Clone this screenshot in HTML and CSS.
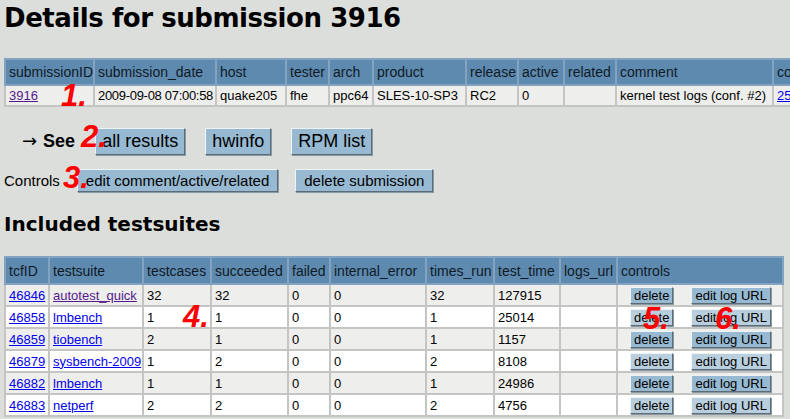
FILE: index.html
```html
<!DOCTYPE html>
<html>
<head>
<meta charset="utf-8">
<title>Details for submission 3916</title>
<link rel="stylesheet" href="styles.css">
</head>
<body>
<h1 class="title">Details for submission 3916</h1>
<div class="wide">
<table class="grid top">
<colgroup>
<col class="c-sid"><col class="c-date"><col class="c-host"><col class="c-tester"><col class="c-arch"><col class="c-product"><col class="c-release"><col class="c-active"><col class="c-related"><col class="c-comment"><col class="c-config">
</colgroup>
<tr class="head"><th>submissionID</th><th>submission_date</th><th>host</th><th>tester</th><th>arch</th><th>product</th><th>release</th><th>active</th><th>related</th><th>comment</th><th>config</th></tr>
<tr class="odd"><td><a class="visited" href="#">3916</a></td><td class="date">2009-09-08 07:00:58</td><td>quake205</td><td>fhe</td><td>ppc64</td><td>SLES-10-SP3</td><td>RC2</td><td>0</td><td></td><td>kernel test logs (conf. #2)</td><td><a href="#">2534</a></td></tr>
</table>
</div>
<div class="see">
<span class="see-label"><span class="arrow">→</span>See</span>
<button class="btn big">all results</button>
<button class="btn big">hwinfo</button>
<button class="btn big">RPM list</button>
</div>
<div class="controls">
<span class="ctl-label">Controls</span>
<button class="btn mid">edit comment/active/related</button>
<button class="btn mid">delete submission</button>
</div>
<h2 class="sub">Included testsuites</h2>
<table class="grid tests">
<colgroup>
<col class="t-id"><col class="t-suite"><col class="t-cases"><col class="t-succ"><col class="t-fail"><col class="t-int"><col class="t-runs"><col class="t-time"><col class="t-logs"><col class="t-ctl">
</colgroup>
<tr class="head"><th>tcfID</th><th>testsuite</th><th>testcases</th><th>succeeded</th><th>failed</th><th>internal_error</th><th>times_run</th><th>test_time</th><th>logs_url</th><th>controls</th></tr>
<tr class="odd"><td><a href="#">46846</a></td><td><a class="visited" href="#">autotest_quick</a></td><td>32</td><td>32</td><td>0</td><td>0</td><td>32</td><td>127915</td><td></td><td class="ctl"><button class="btn small">delete</button><button class="btn small">edit log URL</button></td></tr>
<tr class="even"><td><a href="#">46858</a></td><td><a href="#">lmbench</a></td><td>1</td><td>1</td><td>0</td><td>0</td><td>1</td><td>25014</td><td></td><td class="ctl"><button class="btn small">delete</button><button class="btn small">edit log URL</button></td></tr>
<tr class="odd"><td><a href="#">46859</a></td><td><a href="#">tiobench</a></td><td>2</td><td>1</td><td>0</td><td>0</td><td>1</td><td>1157</td><td></td><td class="ctl"><button class="btn small">delete</button><button class="btn small">edit log URL</button></td></tr>
<tr class="even"><td><a href="#">46879</a></td><td><a href="#">sysbench-2009</a></td><td>1</td><td>2</td><td>0</td><td>0</td><td>2</td><td>8108</td><td></td><td class="ctl"><button class="btn small">delete</button><button class="btn small">edit log URL</button></td></tr>
<tr class="odd"><td><a href="#">46882</a></td><td><a href="#">lmbench</a></td><td>1</td><td>1</td><td>0</td><td>0</td><td>1</td><td>24986</td><td></td><td class="ctl"><button class="btn small">delete</button><button class="btn small">edit log URL</button></td></tr>
<tr class="even"><td><a href="#">46883</a></td><td><a href="#">netperf</a></td><td>2</td><td>2</td><td>0</td><td>0</td><td>2</td><td>4756</td><td></td><td class="ctl"><button class="btn small">delete</button><button class="btn small">edit log URL</button></td></tr>
</table>
<span class="note n1">1.</span>
<span class="note n2">2.</span>
<span class="note n3">3.</span>
<span class="note n4">4.</span>
<span class="note n5">5.</span>
<span class="note n6">6.</span>
</body>
</html>
```
FILE: styles.css
```css
html, body {
  margin: 0;
  padding: 0;
}
body {
  position: relative;
  background: #dcdedb;
  color: #000;
  font-family: "Liberation Sans", Arial, sans-serif;
  font-size: 13px;
  padding-left: 4px;
  overflow: hidden;
  width: 786px;
  height: 419px;
}
.title {
  font-family: "DejaVu Sans", sans-serif;
  font-weight: bold;
  font-size: 26px;
  letter-spacing: -0.45px;
  line-height: 32px;
  margin: 2px 0 0 0;
}
.wide {
  margin-top: 24px;
  width: 786px;
  overflow: hidden;
}
.grid {
  border-collapse: collapse;
  table-layout: fixed;
  border: 1px solid #a9aba8;
}
.grid th, .grid td {
  white-space: nowrap;
  overflow: hidden;
  text-align: left;
  padding: 0 1px 0 3px;
  border: 2px solid #c4c5c3;
}
.grid th {
  font-weight: normal;
  background: #5f8ab0;
  border-color: #84a3c1;
  color: #0d1a26;
  font-size: 14px;
}
.grid .odd td { background: #eeeeec; }
.grid .even td { background: #ffffff; }
.grid a { color: #0000ee; }
.grid a.visited { color: #551a8b; }
.grid td.date { letter-spacing: -0.3px; }

.top { width: 850px; }
.top .head th { height: 24px; }
.top td { height: 19px; }
.c-sid { width: 89px; }
.c-date { width: 122px; }
.c-host { width: 70px; }
.c-tester { width: 43px; }
.c-arch { width: 44px; }
.c-product { width: 93px; }
.c-release { width: 52px; }
.c-active { width: 46px; }
.c-related { width: 52px; }
.c-comment { width: 157px; }
.c-config { width: 82px; }

.see {
  display: flex;
  align-items: center;
  gap: 20px;
  margin-top: 20px;
  padding-left: 18px;
  height: 28px;
}
.see-label {
  font-size: 18px;
  font-weight: bold;
}
.arrow {
  font-family: "DejaVu Sans", sans-serif;
  font-weight: normal;
  font-size: 18px;
  margin-right: 6px;
}
.controls {
  display: flex;
  align-items: center;
  gap: 17px;
  margin-top: 13px;
  height: 24px;
}
.ctl-label {
  font-size: 15px;
}
.btn {
  font-family: "Liberation Sans", Arial, sans-serif;
  background: #97b9d1;
  color: #000;
  border: 1px solid;
  border-color: #eef3f6 #5b6b77 #5b6b77 #eef3f6;
  box-shadow: 1px 1px 0 #8a9aa5;
  margin: 0;
  cursor: pointer;
}
.btn.big {
  font-size: 18px;
  height: 27px;
  padding: 0 6px;
}
.btn.mid {
  font-size: 15px;
  height: 23px;
  padding: 0 8px;
}
.btn.small {
  font-size: 13px;
  height: 17px;
  padding: 0 3px;
  vertical-align: middle;
}
.even .btn { background: #b9cfdd; }
.ctl .btn:first-child { margin-left: 9px; }
.ctl .btn + .btn { margin-left: 18px; }

.sub {
  font-family: "DejaVu Sans", sans-serif;
  font-weight: bold;
  font-size: 20px;
  line-height: 26px;
  margin: 19px 0 0 0;
}
.tests {
  margin-top: 19px;
  width: 778px;
}
.tests .head th { height: 25px; }
.tests td { height: 20px; }
.t-id { width: 44px; }
.t-suite { width: 94px; }
.t-cases { width: 68px; }
.t-succ { width: 77px; }
.t-fail { width: 42px; }
.t-int { width: 96px; }
.t-runs { width: 68px; }
.t-time { width: 66px; }
.t-logs { width: 57px; }
.t-ctl { width: 166px; }

.note {
  position: absolute;
  color: #ff0000;
  font-family: "Liberation Sans", Arial, sans-serif;
  font-weight: bold;
  font-style: italic;
  font-size: 31px;
  line-height: 1;
}
.n1 { left: 61px; top: 80px; }
.n2 { left: 81px; top: 121px; }
.n3 { left: 63px; top: 162px; }
.n4 { left: 183px; top: 301px; }
.n5 { left: 643px; top: 303px; }
.n6 { left: 715px; top: 303px; }
```
